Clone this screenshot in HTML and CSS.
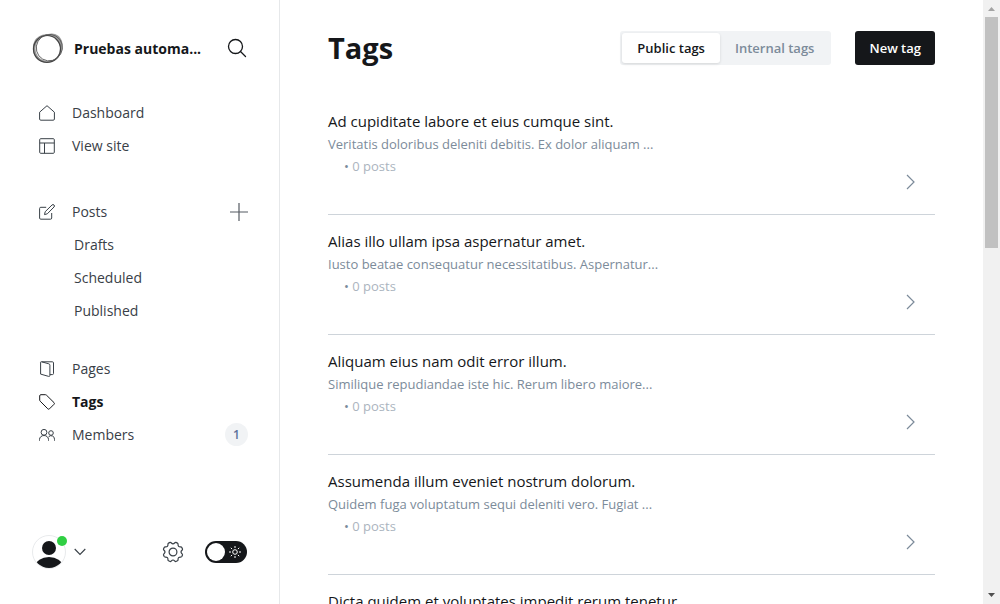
FILE: index.html
```html
<!DOCTYPE html>
<html lang="en">
<head>
<meta charset="utf-8">
<meta name="viewport" content="width=device-width, initial-scale=1">
<title>Tags</title>
<link rel="stylesheet" href="styles.css">
</head>
<body>
<div class="app">
  <aside class="sidebar">
    <header class="brand">
      <svg class="brand-logo" viewBox="0 0 32 32" fill="none">
        <path fill="#999" fill-rule="evenodd" d="M16 2C22 0 28 3 30 9c2 8-1 15-7 19-6 4-15 3-19-2C0 21 0 13 3 8 6 4 11 2 16 2zM16 4C9 4 3.500 9 3.500 16.500S9 29 16 29s12-6 12-13S23 4 16 4z"/>
        <ellipse cx="15" cy="17" rx="13.500" ry="13.500" stroke-width="1.200" stroke="#444"/>
        <ellipse cx="17" cy="15" rx="13" ry="13.300" stroke-width=".8" stroke="#555" transform="rotate(30 16 16)"/>
      </svg>
      <span class="brand-name">Pruebas automa...</span>
      <button class="icon-button" type="button" aria-label="Search">
        <svg width="20" height="20" viewBox="0 0 20 20" fill="none" stroke="#15171a" stroke-width="1.300" stroke-linecap="round"><circle cx="8.500" cy="8.500" r="7"/><path d="M13.500 13.500 18.500 18.500"/></svg>
      </button>
    </header>
    <nav class="nav">
      <ul class="nav-group">
        <li class="nav-item"><a class="nav-link" href="#dashboard">
          <svg class="nav-icon" viewBox="0 0 16 16"><path d="M.6 7.200 8 .7l7.400 6.500v6.800a1.200 1.200 0 0 1-1.200 1.200H1.800A1.200 1.200 0 0 1 .6 14z"/></svg>Dashboard</a></li>
        <li class="nav-item"><a class="nav-link" href="#site">
          <svg class="nav-icon" viewBox="0 0 16 16"><rect x=".7" y=".7" width="14.600" height="14.600" rx="1"/><path d="M.7 5h14.600M5.500 5v10.300"/></svg>View site</a></li>
      </ul>
      <ul class="nav-group">
        <li class="nav-item"><a class="nav-link" href="#posts">
          <svg class="nav-icon" viewBox="0 0 16 16"><path d="M12.700 9v5a1.200 1.200 0 0 1-1.200 1.200H1.800A1.200 1.200 0 0 1 .6 14V4.500a1.200 1.200 0 0 1 1.200-1.200h5.400M5.500 10.600l.7-2.900L13 1a1.300 1.300 0 0 1 2 2l-6.700 6.800z"/></svg>Posts</a>
          <button class="icon-button" type="button" aria-label="New post"><svg width="18" height="18" viewBox="0 0 18 18" stroke="#555b63" stroke-width="1.200"><path d="M9 0v18M0 9h18"/></svg></button></li>
        <li class="nav-item"><a class="nav-link nav-sub" href="#drafts">Drafts</a></li>
        <li class="nav-item"><a class="nav-link nav-sub" href="#scheduled">Scheduled</a></li>
        <li class="nav-item"><a class="nav-link nav-sub" href="#published">Published</a></li>
      </ul>
      <ul class="nav-group">
        <li class="nav-item"><a class="nav-link" href="#pages">
          <svg class="nav-icon" viewBox="0 0 16 16"><path d="M1.600 1.200v11.900l8.100 2.300c.8.200 1.200-.2 1.200-.9V4.200c0-.8-.4-1.200-1.100-1.400L2.600.8c-.6-.2-1 0-1 .4zM2.800.8h10.600c.7 0 1.100.4 1.100 1.100v10.700c0 .6-.4 1-1.100 1h-2.500"/></svg>Pages</a></li>
        <li class="nav-item"><a class="nav-link nav-current" href="#tags" aria-current="page">
          <svg class="nav-icon" viewBox="0 0 16 16"><path d="M.7 1.900V6c0 .5.200.9.500 1.200l7.600 7.600a1.200 1.200 0 0 0 1.700 0l4.500-4.500a1.200 1.200 0 0 0 0-1.700L7.500 1.200A1.700 1.700 0 0 0 6.300.7H1.900A1.200 1.200 0 0 0 .7 1.900z"/></svg>Tags</a></li>
        <li class="nav-item"><a class="nav-link" href="#members">
          <svg class="nav-icon" viewBox="0 0 16 16"><circle cx="5" cy="5.300" r="2.900"/><circle cx="12" cy="6" r="2.300"/><path d="M.5 13.700V12.500a4.500 4 0 0 1 9 0v1.200M9.600 9.800a3.400 3.400 0 0 1 5.900 2.500v1.400"/></svg>Members</a>
          <span class="badge">1</span></li>
      </ul>
    </nav>
    <footer class="account">
      <button class="user" type="button" aria-label="Account menu">
        <svg width="50" height="34" viewBox="0 0 50 34">
          <defs><clipPath id="face"><circle cx="17" cy="17" r="16"/></clipPath></defs>
          <circle cx="17" cy="17" r="16.500" fill="#fff" stroke="#e8eaec"/>
          <g clip-path="url(#face)" fill="#15171a"><circle cx="17" cy="13" r="7"/><ellipse cx="17" cy="31" rx="13.500" ry="9"/></g>
          <circle cx="30" cy="6" r="5" fill="#30cf43"/>
        </svg>
        <svg class="user-caret" width="12" height="8" viewBox="0 0 12 8" fill="none" stroke="#394047" stroke-width="1.100"><path d="M.7 1 6 6.500 11.300 1"/></svg>
      </button>
      <button class="icon-button settings" type="button" aria-label="Settings">
        <svg width="22" height="22" viewBox="0 0 22 22" fill="none" stroke="#394047" stroke-width="1.200" stroke-linejoin="round"><circle cx="11" cy="11" r="3.900"/><path d="M11 2.900c1.600 0 1.700-1.900 2.900-1.500l1.600.7c1.200.5-.1 2 1.100 3.200s2.700-.1 3.200 1.100l.7 1.700c.4 1.100-1.500 1.200-1.500 2.900s1.900 1.800 1.500 2.900l-.7 1.700c-.5 1.100-2-.2-3.200 1s.1 2.700-1.100 3.200l-1.600.7c-1.200.4-1.300-1.500-2.900-1.500s-1.700 1.900-2.900 1.500l-1.600-.7c-1.200-.5.100-2-1.100-3.200s-2.700.1-3.200-1l-.7-1.700c-.4-1.100 1.500-1.200 1.500-2.900S1.100 9.200 1.500 8.100l.7-1.700c.5-1.200 2 .1 3.200-1.100s-.1-2.700 1.100-3.200l1.600-.7c1.200-.4 1.300 1.500 2.900 1.500z"/></svg>
      </button>
      <label class="theme">
        <input class="theme-input" type="checkbox" aria-label="Night shift">
        <svg class="theme-sun" viewBox="0 0 12 12" fill="none" stroke="#fff"><circle cx="6" cy="6" r="2.300"/><path d="M6 0v2M6 10v2M0 6h2M10 6h2M1.800 1.800l1.300 1.300M8.900 8.900l1.300 1.300M1.800 10.200l1.300-1.300M8.900 3.100l1.300-1.300"/></svg>
      </label>
    </footer>
  </aside>
  <main class="content">
    <header class="toolbar">
      <h1 class="page-title">Tags</h1>
      <div class="segments">
        <button class="segment segment-on" type="button">Public tags</button>
        <button class="segment" type="button">Internal tags</button>
      </div>
      <button class="primary" type="button">New tag</button>
    </header>
    <ol class="tag-list">
      <li><a class="tag" href="#t1"><div class="tag-text"><h3 class="tag-name">Ad cupiditate labore et eius cumque sint.</h3><p class="tag-desc">Veritatis doloribus deleniti debitis. Ex dolor aliquam ...</p><p class="tag-count"><span class="dot">•</span> 0 posts</p></div><svg class="chevron" viewBox="0 0 10 16"><path d="M1 1l7 7-7 7"/></svg></a></li>
      <li><a class="tag" href="#t2"><div class="tag-text"><h3 class="tag-name">Alias illo ullam ipsa aspernatur amet.</h3><p class="tag-desc">Iusto beatae consequatur necessitatibus. Aspernatur...</p><p class="tag-count"><span class="dot">•</span> 0 posts</p></div><svg class="chevron" viewBox="0 0 10 16"><path d="M1 1l7 7-7 7"/></svg></a></li>
      <li><a class="tag" href="#t3"><div class="tag-text"><h3 class="tag-name">Aliquam eius nam odit error illum.</h3><p class="tag-desc">Similique repudiandae iste hic. Rerum libero maiore...</p><p class="tag-count"><span class="dot">•</span> 0 posts</p></div><svg class="chevron" viewBox="0 0 10 16"><path d="M1 1l7 7-7 7"/></svg></a></li>
      <li><a class="tag" href="#t4"><div class="tag-text"><h3 class="tag-name">Assumenda illum eveniet nostrum dolorum.</h3><p class="tag-desc">Quidem fuga voluptatum sequi deleniti vero. Fugiat ...</p><p class="tag-count"><span class="dot">•</span> 0 posts</p></div><svg class="chevron" viewBox="0 0 10 16"><path d="M1 1l7 7-7 7"/></svg></a></li>
      <li><a class="tag" href="#t5"><div class="tag-text"><h3 class="tag-name">Dicta quidem et voluptates impedit rerum tenetur</h3></div></a></li>
    </ol>
  </main>
  <div class="scrollbar" aria-hidden="true">
    <svg class="scroll-arrow" viewBox="0 0 17 17"><path fill="#a3a3a3" d="M5 11h7L8.500 7z"/></svg>
    <div class="scroll-thumb"></div>
    <svg class="scroll-arrow" viewBox="0 0 17 17"><path fill="#505050" d="M5 6h7l-3.500 4z"/></svg>
  </div>
</div>
</body>
</html>
```
FILE: styles.css
```css
* { box-sizing: border-box; }
body, h1, h3, p, ul, ol { margin: 0; padding: 0; }
ul, ol { list-style: none; }
body { font-family: "Open Sans", "Noto Sans", sans-serif; font-size: 15px; color: #15171a; background: #fff; }
a { color: inherit; text-decoration: none; }
button { font: inherit; color: inherit; background: none; border: 0; padding: 0; cursor: pointer; }
svg { display: block; flex: none; }

.app { display: grid; grid-template-columns: 280px minmax(0, 1fr) 17px; height: 100vh; overflow: hidden; }

.sidebar { display: flex; flex-direction: column; border-right: 1px solid #e6e8ea; padding: 0 31px 20px 32px; }
.brand { display: flex; align-items: center; height: 96px; gap: 10px; padding-right: 1px; }
.brand-logo { width: 32px; height: 32px; }
.brand-name { flex: 1; font-size: 14px; font-weight: 700; white-space: nowrap; }
.icon-button { display: flex; flex: none; }

.nav { flex: 1; display: flex; flex-direction: column; }
.nav-group { margin-bottom: 33px; }
.nav-group + .nav-group { margin-bottom: 25px; }
.nav-item { display: flex; align-items: center; height: 33px; }
.nav-link { flex: 1; display: flex; align-items: center; gap: 17px; padding-left: 7px; font-size: 14px; font-weight: 400; color: #394047; }
.nav-sub { padding-left: 42px; }
.nav-current { font-weight: 700; color: #15171a; }
.nav-icon { width: 16px; height: 16px; fill: none; stroke: currentColor; stroke-width: 1; }
.badge { min-width: 23px; height: 23px; border-radius: 12px; background: #f1f3f5; font-size: 12px; line-height: 23px; text-align: center; color: #5d7199; font-weight: 600; }

.account { display: flex; align-items: center; height: 64px; padding-right: 1px; }
.user { display: flex; align-items: center; margin-right: auto; }
.user-caret { margin-left: -8px; }
.settings { margin-right: 21px; }
.theme { display: grid; align-items: center; }
.theme-input, .theme-sun { grid-area: 1 / 1; }
.theme-input { appearance: none; margin: 0; width: 42px; height: 22px; border-radius: 11px; background: #15171a; display: flex; align-items: center; padding: 2px; }
.theme-input::before { content: ""; width: 18px; height: 18px; border-radius: 50%; background: #fff; }
.theme-sun { width: 12px; height: 12px; justify-self: end; margin-right: 6px; pointer-events: none; }

.content { padding: 0 48px; min-width: 0; overflow: hidden; }
.toolbar { display: flex; align-items: center; padding: 31px 0 30px; }
.page-title { flex: 1; font-size: 29px; line-height: 34px; font-weight: 700; }
.segments { display: flex; padding: 2px; height: 34px; border-radius: 3px; background: #f1f3f5; margin-right: 24px; }
.segment { padding: 0 15px; border-radius: 3px; font-size: 13px; font-weight: 600; color: #7c8b9a; white-space: nowrap; }
.segment-on { background: #fff; color: #15171a; box-shadow: 0 1px 3px rgba(0, 0, 0, .12); }
.primary { height: 34px; padding: 0 14px; border-radius: 3px; background: #15171a; color: #fff; font-size: 13px; font-weight: 600; white-space: nowrap; }

.tag { display: flex; align-items: flex-end; height: 120px; border-bottom: 1px solid #ced4da; }
.tag-text { flex: 1; min-width: 0; align-self: flex-start; padding-top: 14px; }
.tag-name { font-size: 15px; line-height: 24px; font-weight: 500; }
.tag-desc { font-size: 13px; line-height: 22px; color: #7c8b9a; }
.tag-count { font-size: 13px; line-height: 22px; color: #abb4be; padding-left: 16px; }
.dot { color: #7c8b9a; }
.chevron { width: 10px; height: 16px; margin: 0 19px 24px 0; fill: none; stroke: #7c8b9a; stroke-width: 1.2; }

.scrollbar { display: flex; flex-direction: column; background: #f1f1f1; }
.scroll-arrow { width: 17px; height: 17px; }
.scroll-arrow:last-child { margin-top: auto; }
.scroll-thumb { height: 40%; margin: 0 2px; background: #c1c1c1; max-height: 231px; }
```
